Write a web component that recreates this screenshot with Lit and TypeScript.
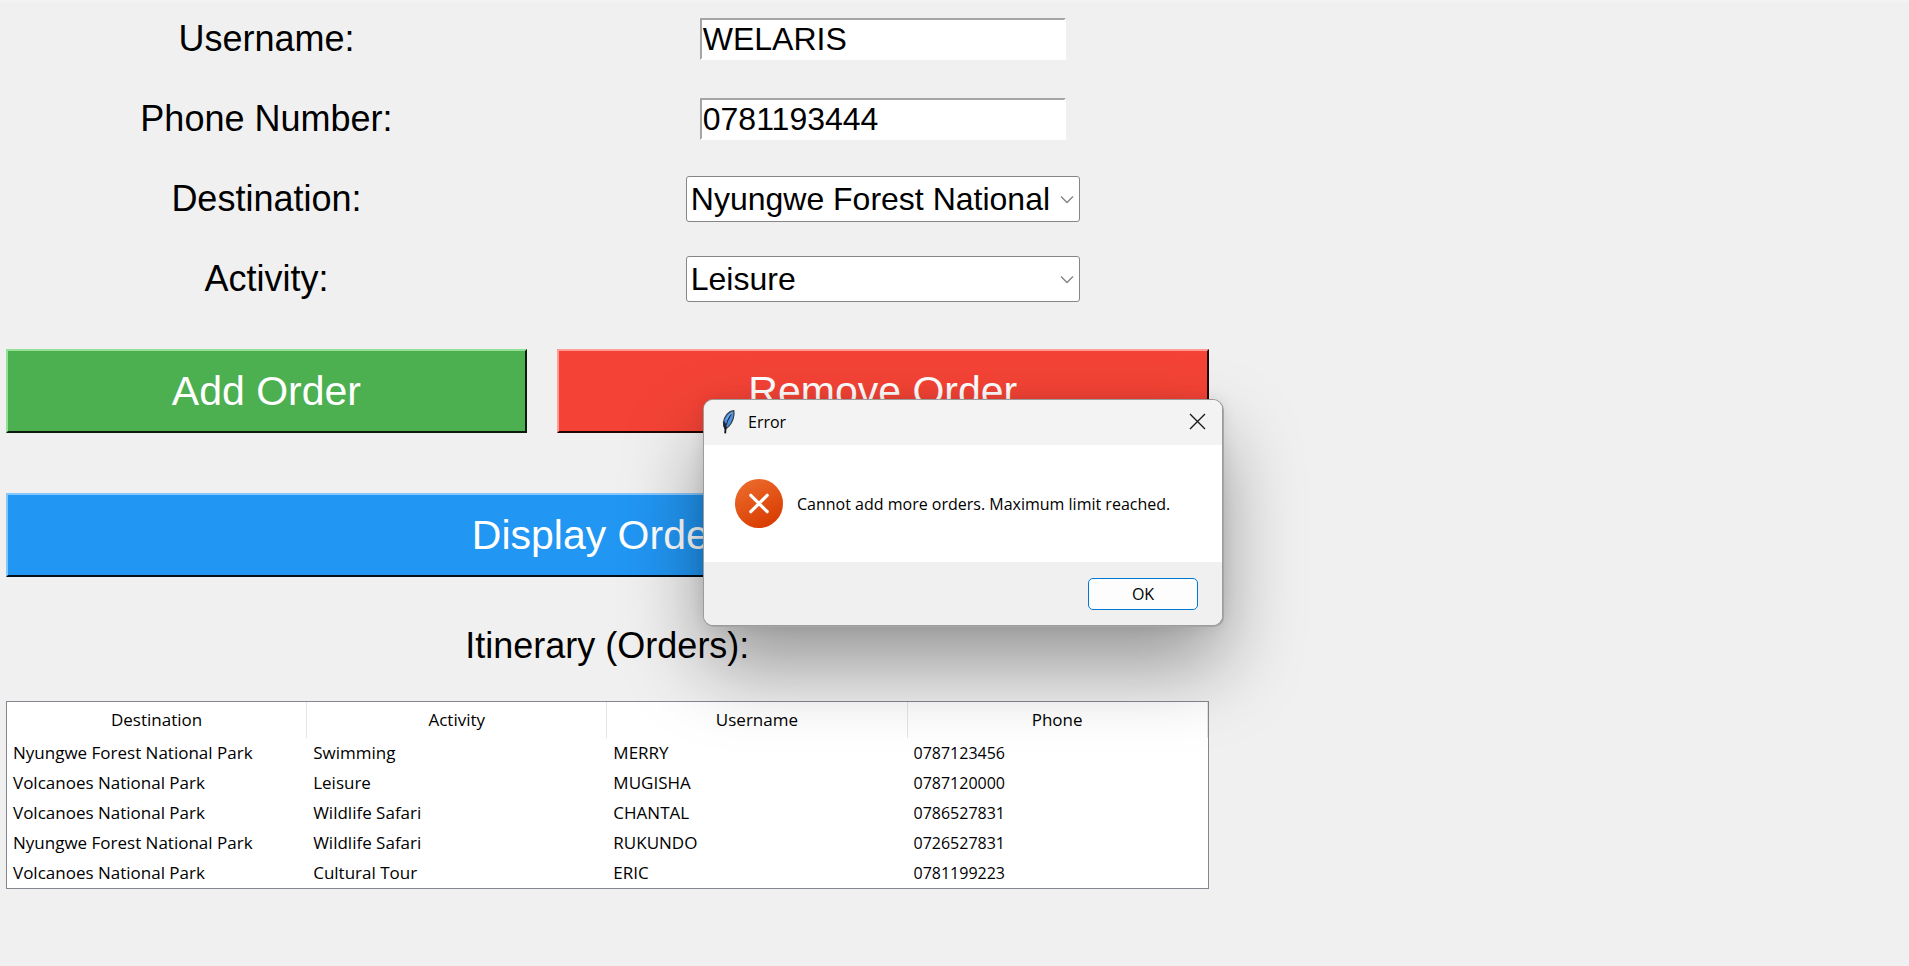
import { LitElement, html, css, svg } from "lit";
import { customElement, state } from "lit/decorators.js";

interface Order {
  destination: string;
  activity: string;
  username: string;
  phone: string;
}

const DESTINATIONS = ["Nyungwe Forest National Park", "Volcanoes National Park"];
const ACTIVITIES = ["Leisure", "Swimming", "Wildlife Safari", "Cultural Tour"];

const chevron = svg`<svg class="chevron" width="14" height="9" viewBox="0 0 14 9" aria-hidden="true">
  <path d="M1 1.5 L7 7.5 L13 1.5" fill="none" stroke="#858585" stroke-width="1.4"/>
</svg>`;

@customElement("error-dialog")
export class ErrorDialog extends LitElement {
  static styles = css`
    :host {
      display: block;
    }
    .window {
      position: static;
      display: block;
      box-sizing: border-box;
      width: 100%;
      margin: 0;
      padding: 0;
      border: 0;
      border-radius: 9px;
      overflow: hidden;
      background: #fff;
      color: #000;
      font: 16px/24px "Open Sans", sans-serif;
      box-shadow: 0 0 0 1px #9c9c9c, 1px 1px 0 1px #a6a6a6,
        0 0 16px rgba(0, 0, 0, 0.1), 0 40px 80px rgba(0, 0, 0, 0.38);
    }
    .titlebar {
      display: flex;
      align-items: center;
      box-sizing: border-box;
      height: 45px;
      padding: 0 16px 2px;
      background: #f3f3f3;
    }
    .title {
      flex: 1;
      margin: 0;
      padding-left: 12px;
      font-size: 16px;
      font-weight: 400;
    }
    .close {
      display: flex;
      padding: 0;
      border: 0;
      background: none;
    }
    .body {
      display: flex;
      align-items: center;
      gap: 14px;
      height: 117px;
      padding: 0 31px;
    }
    .message {
      margin: 0;
      white-space: nowrap;
    }
    .footer {
      display: flex;
      justify-content: flex-end;
      padding: 16px 24px 15px;
      background: #f0f0f0;
    }
    .ok {
      width: 110px;
      height: 32px;
      padding: 0;
      border: 1px solid #0078d4;
      border-radius: 5px;
      background: #fdfdfd;
      color: #000;
      font: inherit;
    }
  `;

  render() {
    return html`
      <dialog class="window" open aria-labelledby="title">
        <header class="titlebar">
          <svg width="16" height="26" viewBox="0 0 16 26" aria-hidden="true">
            <path d="M13.8 1.6 C15 6.4 12.6 13.4 8.8 17.4 L5.6 20 C2.2 16.4 3 10.6 6.4 6.2 C8.6 3.4 11.2 1.8 13.8 1.6 Z" fill="#4a8fe0" stroke="#3a3f46" stroke-width="1.2"/>
            <path d="M4 12 C2.6 15 3 18 5 20.4 L6 15 Z" fill="#23282f"/>
            <path d="M11.2 5 C8.6 9 6.6 13.6 5.2 19" fill="none" stroke="#1c2a40" stroke-width="1.1"/>
            <path d="M12.2 3.6 C9.6 5.4 7.4 8 6.4 10.6" fill="none" stroke="#8fc0f5" stroke-width="1"/>
            <path d="M5.6 17.5 L5.2 24.4" fill="none" stroke="#0f1216" stroke-width="1.8"/>
          </svg>
          <h2 class="title" id="title">Error</h2>
          <button class="close" aria-label="Close">
            <svg width="17" height="17" viewBox="0 0 17 17" aria-hidden="true">
              <path d="M1 1 L16 16 M16 1 L1 16" stroke="#1a1a1a" stroke-width="1.4"/>
            </svg>
          </button>
        </header>
        <div class="body">
          <svg width="48" height="49" viewBox="0 0 48 49" aria-hidden="true">
            <defs>
              <linearGradient id="disc" x1="0.2" y1="0" x2="0.7" y2="1">
                <stop offset="0" stop-color="#ec6c2c"/>
                <stop offset="1" stop-color="#d83b01"/>
              </linearGradient>
            </defs>
            <ellipse cx="24" cy="24.5" rx="24" ry="24.5" fill="url(#disc)"/>
            <path d="M15.8 16.3 L32.2 32.7 M32.2 16.3 L15.8 32.7" stroke="#fff" stroke-width="3.2" stroke-linecap="round"/>
          </svg>
          <p class="message">Cannot add more orders. Maximum limit reached.</p>
        </div>
        <footer class="footer">
          <button class="ok">OK</button>
        </footer>
      </dialog>
    `;
  }
}

@customElement("app-root")
export class AppRoot extends LitElement {
  static styles = css`
    :host {
      display: block;
      position: relative;
      box-sizing: border-box;
      min-height: 100vh;
      padding: 14px 6px;
      border-top: 2px solid #f3f3f3;
      background: #f0f0f0;
      color: #000;
      font-family: "Liberation Sans", Arial, sans-serif;
    }
    .planner {
      width: 63.4%;
      min-width: 960px;
    }
    .form {
      display: grid;
      grid-template-columns: 521fr 652fr;
      gap: 34px 30px;
      grid-auto-rows: 46px;
      align-items: center;
      justify-items: center;
    }
    .label {
      font-size: 36px;
      line-height: 42px;
    }
    .entry {
      box-sizing: border-box;
      width: 366px;
      height: 42px;
      padding: 0 1px;
      border: solid #fff;
      border-width: 2px;
      border-top-color: #a5a5a5;
      border-left-color: #a5a5a5;
      border-radius: 0;
      background: #fff;
      color: #000;
      font: 32px/36px "Liberation Sans", Arial, sans-serif;
    }
    .combo {
      display: grid;
      align-items: center;
      width: 394px;
    }
    .combo > * {
      grid-area: 1 / 1;
    }
    .select {
      appearance: none;
      box-sizing: border-box;
      width: 100%;
      height: 46px;
      padding: 0 25px 0 4px;
      border: 1px solid #868686;
      border-radius: 3px;
      background: #fff;
      color: #000;
      font: 32px/40px "Liberation Sans", Arial, sans-serif;
    }
    .chevron {
      justify-self: end;
      margin-right: 6px;
      pointer-events: none;
    }
    .actions {
      display: grid;
      grid-template-columns: 521fr 652fr;
      gap: 60px 30px;
      margin-top: 47px;
    }
    .action {
      height: 84px;
      padding: 0;
      border-style: solid;
      border-width: 2px;
      color: #fff;
      font: 41px/48px "Liberation Sans", Arial, sans-serif;
    }
    .add {
      background: #4caf50;
      border-color: #93e096 #0b1c0c #0b1c0c #93e096;
    }
    .remove {
      background: #f44336;
      border-color: #ff9d95 #1f0503 #1f0503 #ff9d95;
    }
    .display {
      grid-column: 1 / -1;
      background: #2196f3;
      border-color: #85c8ff #02101c #02101c #85c8ff;
    }
    .heading {
      margin: 48px 0 34px;
      font-size: 36px;
      font-weight: 400;
      line-height: 42px;
      text-align: center;
    }
    .orders {
      width: 100%;
      table-layout: fixed;
      border-collapse: separate;
      border-spacing: 0;
      border: 1px solid #828790;
      background: #fff;
      font: 17px/22px "Open Sans", sans-serif;
    }
    .orders th {
      height: 36px;
      padding: 0;
      border-right: 1px solid #e5e5e5;
      font-weight: 400;
      text-align: center;
    }
    .orders td {
      height: 30px;
      padding: 0 6px;
      white-space: nowrap;
    }
    .orders .phone {
      font-size: 16px;
    }
    .popup {
      position: absolute;
      left: 704px;
      top: 398px;
      width: 518px;
    }
  `;

  @state() private orders: Order[] = [
    { destination: "Nyungwe Forest National Park", activity: "Swimming", username: "MERRY", phone: "0787123456" },
    { destination: "Volcanoes National Park", activity: "Leisure", username: "MUGISHA", phone: "0787120000" },
    { destination: "Volcanoes National Park", activity: "Wildlife Safari", username: "CHANTAL", phone: "0786527831" },
    { destination: "Nyungwe Forest National Park", activity: "Wildlife Safari", username: "RUKUNDO", phone: "0726527831" },
    { destination: "Volcanoes National Park", activity: "Cultural Tour", username: "ERIC", phone: "0781199223" },
  ];

  render() {
    return html`
      <main class="planner">
        <div class="form">
          <label class="label" for="username">Username:</label>
          <input class="entry" id="username" type="text" .value=${"WELARIS"} />
          <label class="label" for="phone">Phone Number:</label>
          <input class="entry" id="phone" type="tel" .value=${"0781193444"} />
          <label class="label" for="destination">Destination:</label>
          <div class="combo">
            <select class="select" id="destination">
              ${DESTINATIONS.map((name) => html`<option>${name}</option>`)}
            </select>
            ${chevron}
          </div>
          <label class="label" for="activity">Activity:</label>
          <div class="combo">
            <select class="select" id="activity">
              ${ACTIVITIES.map((name) => html`<option>${name}</option>`)}
            </select>
            ${chevron}
          </div>
        </div>
        <div class="actions">
          <button class="action add">Add Order</button>
          <button class="action remove">Remove Order</button>
          <button class="action display">Display Orders</button>
        </div>
        <h1 class="heading" id="orders-heading">Itinerary (Orders):</h1>
        <table class="orders" aria-labelledby="orders-heading">
          <thead>
            <tr>
              <th scope="col">Destination</th>
              <th scope="col">Activity</th>
              <th scope="col">Username</th>
              <th scope="col">Phone</th>
            </tr>
          </thead>
          <tbody>
            ${this.orders.map(
              (order) => html`<tr>
                <td>${order.destination}</td>
                <td>${order.activity}</td>
                <td>${order.username}</td>
                <td class="phone">${order.phone}</td>
              </tr>`
            )}
          </tbody>
        </table>
      </main>
      <error-dialog class="popup"></error-dialog>
    `;
  }
}
